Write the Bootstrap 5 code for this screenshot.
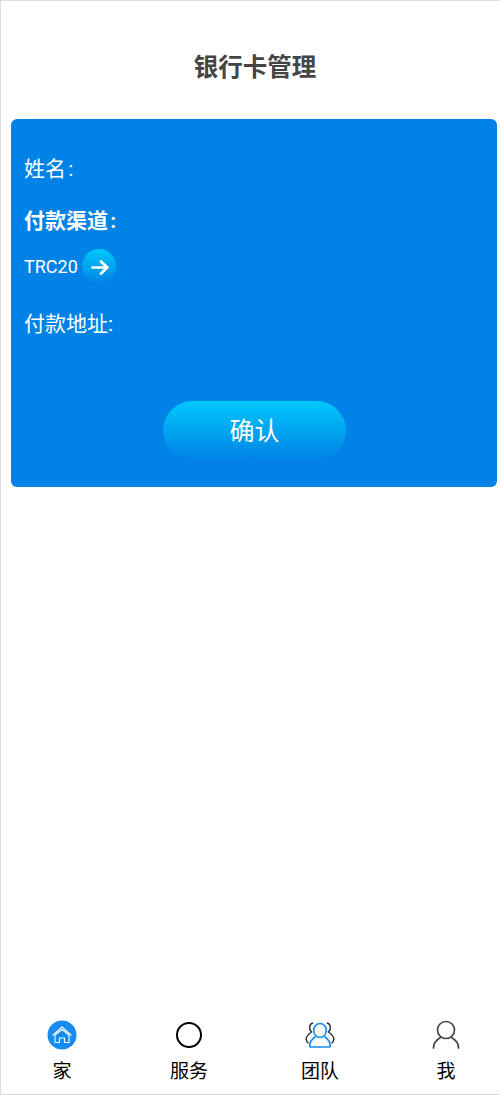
<!DOCTYPE html>
<html lang="zh-CN">
<head>
<meta charset="utf-8">
<title>银行卡管理</title>
<link href="https://cdn.jsdelivr.net/npm/bootstrap@5.3.0/dist/css/bootstrap.min.css" rel="stylesheet">
<style>
html,body{height:100%;background:#fff;}
body{font-family:Roboto,"Noto Sans CJK SC",sans-serif;color:#000;}
.app-frame{height:1095px;border-top:1px solid #ddd;border-left:1px solid #ddd;border-bottom:1px solid #ddd;}
.page-title{font-size:24.5px;font-weight:700;color:#444;line-height:36px;padding-top:49px;margin:0;text-align:center;height:118px;padding-left:9px;}
.bank-panel{margin-left:10px;width:486px;height:368px;background:#0082e6;border-radius:6px;color:#fff;padding:35px 13px 0;}
.field-line{font-size:21px;line-height:30px;margin:0;word-spacing:-3px;}
.field-bold{font-weight:700;margin-top:22px;}
.channel-row{font-size:18px;margin-top:13px;height:35px;gap:4px;}
.go-circle{width:34px;height:35px;border-radius:50%;background:linear-gradient(180deg,#00c8fa,#0082e6);padding-left:2px;padding-top:2px;}
.addr-line{margin-top:25px;}
.confirm-btn{width:183px;height:59px;margin:62px 0 0 139px;border:0;border-radius:30px;font-size:25px;color:#fff;background:linear-gradient(180deg,#00c8fa,#0082e6);padding:3px 0 0;}
.confirm-btn:hover,.confirm-btn:active{color:#fff;background:linear-gradient(180deg,#00c8fa,#0082e6);}
.tab-bar{display:grid;grid-template-columns:127px 131px 126px 40px;padding-left:41px;padding-bottom:8px;}
.tab-item{width:40px;text-align:center;font-size:19px;line-height:28px;color:#000;text-decoration:none;}
.tab-icon{display:block;width:32px;height:32px;margin:0 auto 7px;}
</style>
</head>
<body class="m-0">
<div class="app-frame d-flex flex-column">
  <h1 class="page-title">银行卡管理</h1>
  <main class="flex-grow-1">
    <section class="bank-panel">
      <p class="field-line">姓名 :</p>
      <p class="field-line field-bold">付款渠道 :</p>
      <div class="channel-row d-flex align-items-center">
        <span>TRC20</span>
        <span class="go-circle d-flex align-items-center justify-content-center">
          <svg width="18" height="15" viewBox="0 0 18 15" fill="none" stroke="#fff" stroke-width="2.7" stroke-linecap="round" stroke-linejoin="round"><path d="M1.5 7.5H16.3M10 1.5L16.3 7.5L10 13.5"/></svg>
        </span>
      </div>
      <p class="field-line addr-line">付款地址:</p>
      <button type="button" class="btn confirm-btn d-block">确认</button>
    </section>
  </main>
  <nav class="tab-bar">
    <a class="tab-item" href="#">
      <svg class="tab-icon" viewBox="0 0 32 32" fill="none"><circle cx="16" cy="16" r="14.5" fill="#178bf0"/><path d="M6.5 16.5L16 8L25.5 16.5" stroke="#fff" stroke-width="1.1"/><path d="M9 16V23.5H13.5V19H18.5V23.5H23V16L16 10.5Z" stroke="#fff" stroke-width="1.1" stroke-linejoin="round"/></svg>
      家
    </a>
    <a class="tab-item" href="#">
      <svg class="tab-icon" viewBox="0 0 32 32" fill="none"><circle cx="16" cy="16" r="12" stroke="#000" stroke-width="2"/></svg>
      服务
    </a>
    <a class="tab-item" href="#">
      <svg class="tab-icon" viewBox="0 0 32 32" fill="none"><ellipse cx="16" cy="11.5" rx="6.3" ry="7" stroke="#178bf0" stroke-width="1.7"/><path d="M5.6 28C5.6 22.5 8.5 19.5 11.5 17.5M26.4 28C26.4 22.5 23.5 19.5 20.5 17.5M5.6 28H26.4" stroke="#178bf0" stroke-width="1.7"/><path d="M9 4C5 5 4.5 10 7.5 13C4.5 15 2 18 2.2 20.5C2.4 22.5 3.5 23.5 4.5 24.3M23 4C27 5 27.5 10 24.5 13C27.5 15 30 18 29.8 20.5C29.6 22.5 28.5 23.5 27.5 24.3" stroke="#222" stroke-width="1.3"/></svg>
      团队
    </a>
    <a class="tab-item" href="#">
      <svg class="tab-icon" viewBox="0 0 32 32" fill="none" stroke="#444" stroke-width="1.7"><circle cx="16" cy="11" r="8.5"/><path d="M3.5 29C3.5 24 7 20.5 10.5 18.5M28.5 29C28.5 24 25 20.5 21.5 18.5" stroke-linecap="round"/></svg>
      我
    </a>
  </nav>
</div>
<script src="https://cdn.jsdelivr.net/npm/bootstrap@5.3.0/dist/js/bootstrap.bundle.min.js"></script>
</body>
</html>
